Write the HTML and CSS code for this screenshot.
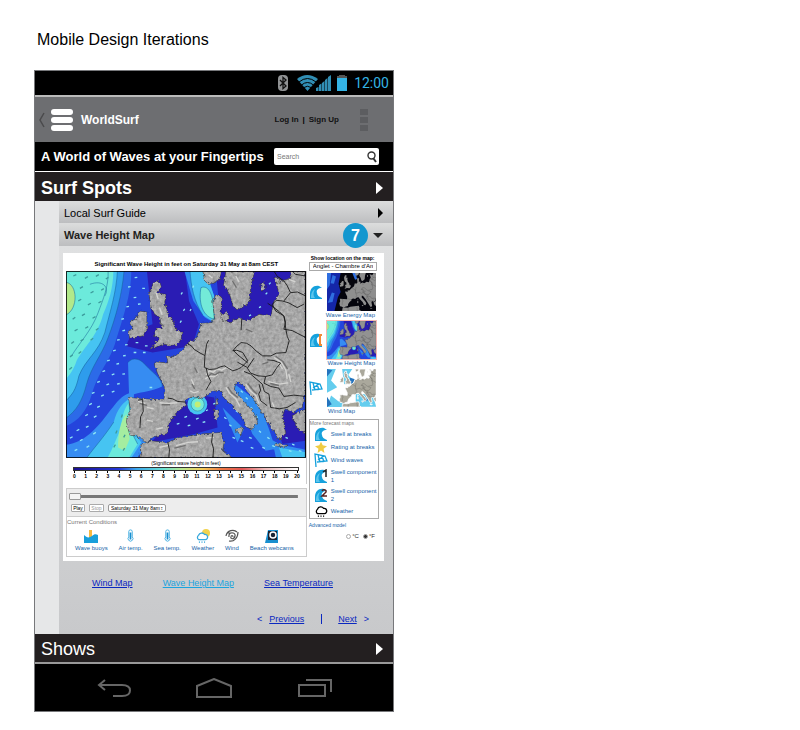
FILE: index.html
```html
<!DOCTYPE html>
<html lang="en">
<head>
<meta charset="utf-8">
<meta name="viewport" content="width=device-width, initial-scale=1">
<title>WorldSurf - Wave Height Map</title>
<link rel="stylesheet" href="styles.css">
</head>
<body>
<svg class="defs" aria-hidden="true">
  <defs>
    <filter id="terrain" x="0" y="0" width="100%" height="100%" color-interpolation-filters="sRGB">
      <feTurbulence type="fractalNoise" baseFrequency="0.1" numOctaves="3" seed="4" result="n"/>
      <feDisplacementMap in="SourceGraphic" in2="n" scale="12" xChannelSelector="R" yChannelSelector="G" result="d"/>
      <feColorMatrix in="n" type="matrix" values="1 0 0 0 0  1 0 0 0 0  1 0 0 0 0  0 0 0 0 1" result="g"/>
      <feComposite in="g" in2="d" operator="in" result="gi"/>
      <feComposite in="d" in2="gi" operator="arithmetic" k1="0" k2="1" k3="0.25" k4="-0.1" result="mix"/>
      <feComposite in="mix" in2="d" operator="in"/>
    </filter>
    <symbol id="sea" viewBox="18 60 723 562" preserveAspectRatio="none">
      <path fill="#2444dc" d="M18 60h723v562H18z"/>
      <path fill="#2a1cb4" d="M262 60h115l12 90 30 70-20 65-120 20-80-20 20-45 60-20zM470 60h275v160H485zM345 490l60-60 60 10 10 90-70 20-130 25zM630 470l111 20v80l-70 10z"/>
      <path fill="#2c6ae8" d="M18 60h197c0 70-25 140-47 210-16 60-52 90-72 160-15 50-40 80-78 96z"/>
      <path fill="#2e9cec" d="M18 60h175c-6 70-25 140-48 200-20 55-50 85-65 140-12 48-30 80-62 102z"/>
      <path fill="#46c4f2" d="M18 60h155c-3 65-23 125-38 185-20 60-58 80-78 130-10 45-20 55-39 75z"/>
      <path fill="#6ceadb" d="M18 60h143c-1 50-13 90-31 130-16 65-60 100-80 140-10 30-20 40-32 55z"/>
      <path fill="#b2e98a" d="M18 94c35 5 38 80 0 98z"/>
      <path fill="#368cf2" d="M205 335c15-20 40-10 55 10 20 22 50 40 48 62-35 15-55 15-85 23l-5 90 47 55-30 45-217 2v-40c60-4 105-65 135-105 20-25 30-40 55-50z"/>
      <path fill="#46c4f2" d="M215 440l5 100 25 35-30 47H80c30-40 50-60 82-108 10-40 28-60 53-74z"/>
      <path fill="#6ceadb" d="M208 455l8 90 18 35-26 42h-65c20-35 24-55 40-85 5-42 8-60 25-82z"/>
      <path fill="#a5eda0" d="M200 490l10 75-15 35-20-10c0-40 5-75 25-100z"/>
      <path fill="#318cf0" d="M375 60h68l22 80 7 80-35-20-35-50z"/>
      <path fill="#46c4f2" d="M392 60h45l28 75v78l-34-20c-28-43-36-90-39-133z"/>
      <path fill="#73ead8" d="M425 110c25-10 40 25 40 95-40-10-47-58-40-95z"/>
      <path fill="#318cf0" d="M640 568c30 20 65 20 101 30v24h-90zM520 395l80 60 30 80 20 60-30 5-40-50zM490 470l65 65-20 40z"/>
      <path fill="#46c4f2" d="M660 590l81 15v17h-70z"/>
      <circle fill="#46c4f2" cx="414" cy="461" r="30"/><circle fill="#75ead8" cx="415" cy="461" r="21"/><circle fill="#c3ed74" cx="415" cy="461" r="9"/>
      <g fill="none" stroke="#145f95" stroke-width="1.5"><path d="M145 60c2 45-15 85-30 125-20 55-60 95-80 130M173 60c-3 65-23 125-38 185-20 60-58 80-78 130-10 45-20 55-39 75M193 60c-6 70-25 140-48 200-20 55-50 85-65 140-12 48-30 80-62 102M18 94c35 5 38 80 0 98M90 100c40-15 60 10 45 35M208 455l8 90 18 35M392 60c3 45 11 90 39 133M425 110c25-10 40 25 40 95-40-10-47-58-40-95M80 622c30-40 50-60 82-108M205 335c15-20 40-10 55 10 20 22 50 40 48 62M395 461a20 20 0 1 0 40 0 20 20 0 1 0-40 0"/></g>
    </symbol>
    <g id="flow" fill="none" stroke-width="4">
      <path stroke="#3c9c9c" d="M40 75l9-4M75 82l9-5M108 76l9-5M138 84l8-5M60 112l9-5M92 126l9-5M124 118l8-5M55 150l9-5M84 162l9-5M116 156l9-5M38 205l8-6M66 194l9-5M98 202l9-5M44 240l9-5M76 232l9-5M108 238l8-6M34 278l8-6M62 270l9-5M92 268l8-6M30 318l8-6M56 308l8-6M28 356l8-7M185 500l3-9M205 520l3-9M168 548l4-9M192 560l4-8M162 590l5-8M190 600l5-8"/>
      <path stroke="#8ee6f4" d="M225 80l8-1M205 108l8-1M248 112l8 0M222 140l8-1M200 168l8-2M235 160l8-1M185 205l8-2M188 240l8-2M172 268l8-2M196 282l8-1M228 275l8 0M256 285l8 0M160 300l8-2M190 315l8-1M222 305l8 0M250 305l8 0M142 330l8-2M170 340l8-2M128 362l8-3M156 372l8-3M188 370l8-1M112 395l8-3M140 402l8-3M172 400l8-2M96 428l8-3M124 436l8-4M156 424l8-3M88 462l8-4M112 470l8-4M76 495l8-4M102 500l8-5M50 540l8-4M78 530l8-4M30 562l8-4M60 570l8-4M100 550l8-5M44 600l8-4M80 590l8-5M300 372l6-4M270 410l8 0M365 130l4-6M372 180l4-6M362 215l4-6M392 180l3-6M400 110l3-6M352 520l8-2M375 500l8-3M385 525l8-2M410 505l8-3M440 480l6-3M430 515l8-2M462 460l7-3M495 500l7 4M510 522l7 4M530 480l7 4M545 420l6 5M560 440l6 5M575 470l6 5M590 495l6 5M520 560l8 3M545 570l8 3M570 560l8 3M600 540l6 5M625 560l7 4M575 590l8 3M610 590l8 3M640 585l8 3M680 560l7 3M700 580l7 3M670 535l6 3M690 600l8 2M720 600l8 2M620 130l5-5M600 170l6-3M570 195l6-3M540 205l6-3M630 100l5-5"/>
    </g>
    <g id="coast">
      <path d="M280 97l20-7 6 18-12 18 26 4-4 26 10 34 19 25 5 25 18 0-3 25-15 20-40-5-35 15 15-25 10-8-20-7 10-20 15-5-4-30-16-10-10-20-7-40zM240 180l22 3v57l-12 15-40 8-5-23 15-5-12-20 17-10z"/>
      <path d="M285 345l0-12 40 3-5-21 25 3 30-28 12-13 22-12 10-24 6-24 30-2 10-15-5-50 10-20 18 10-3 50 10 15 15 10 30-15 25 10 35-20 35 5 10-45 15-20-10-40 40-5 10-25h41v370l-6 10-4 30-30 15-22-10-8 18 10 55-20 20-25-40-25-40-25-40-35-45-20-10-5 25 35 40 25 30 10 25-15 25-20-10-20-40-40-40-20-30-25 5-25 20-30-5-25 10 3 15-30 25-20 30-5 30-40 10-25 20-20-20-30-5-10-45 13-30-6-38 108 8 0-40-20-40z"/>
      <path d="M430 60h57l-7 27-30 15-14-12zM500 60h88l-12 42-5 50-30 25-18-7-12-40-18-28zM485 195l18-12 8 20-18 10zM605 95l12-4 2 22-12 8zM645 78l18 3-4 18-12-4z"/>
      <path d="M245 580l30-10 50 5 35-15 60-10 65-5 10 30-5 25 30 22H240zM525 536l30-6-10 22zM463 475l15 4-2 28-12-4zM470 440l8 18-9 10zM700 495l41-25v80l-25-15zM650 578l35 5-8 6-25-3z"/>
    </g>
    <g id="relief" fill="none" stroke-width="4">
      <path stroke="#d4d4d2" d="M440 372l10-12 12 4 12-10 14 4 14-8 12 2M438 384l12-8 14 2 12-8M500 410l12 18 18 16 12 22M560 400l14 20 16 14 10 24M645 320l22 14 14 24 4 26M655 330l16 24M628 392l30 8 30-4M690 370l6 24M392 420l12 6 14-4M396 385l8 18M235 452l22 6M262 470l20 4M300 456l28 2 26-2M262 508l18 4M290 535l20-4M290 125l6 20M300 170l8 22M300 590l26-6M350 585l36-10 30-2M440 562l24-2M448 72l12 10M530 75l10 18M690 85l20 8M640 455l8 20"/>
      <path stroke="#707070" d="M446 378l10-10 12 4 12-8 14 2M506 408l12 18 18 14M566 398l14 18 14 14M650 316l22 16 14 22M634 398l26 6M398 400l8 14M240 458l22 6M306 462l26 0M345 592l34-8M406 350l8 16M520 90l12 20M610 340l18-6M560 235l20 8M300 215l14 12"/>
    </g>
    <g id="borders" fill="none" stroke="#161616" stroke-width="2.6" stroke-linejoin="round">
      <path d="M385 278l12 8 8 10 20 12 12 6 5-34 6-12M437 314l-2 36M325 442l14 2 16 8 25 2M235 448l14-2 2 36-8 16-2 34M436 350l14 6 21-2 12-6 13-3 25 15 13-4 12-6 20-20-15-25-18-7-12 2 10-12 15-13 16 2 14 8 16 16 19 14 25 0 16-8 29-2 10-35-6-14-4-21-5-38-14-14-21-16-15-10M546 238l2-34M522 298l14 14 30 24M585 322l-20 30 10 15 22 8 23 2 20-5 14-22 11-13-20-8-20-2M620 377l-5 20 20 10 25 5 15 25 30-4 36 4M555 362l20 8 35 30 6 22 14 8 5 40M600 400l5 18-6 12 6 20 20 15M635 470l26 4 24-4 25-15M640 160l12-12 18 2 20 6 25 14 20-10M645 60l10 16 20 14 10 14 10 21-20 25M640 160l10 20 24 14 6 20-5 21 25 4 41 21M441 352l4 20 10 20-8 14-7 12M535 334l30 16M460 550l-3 24 6 20-2 28M325 575l5 22-2 25M700 60l10 10 31 5M696 125l20-2 25 12"/>
    </g>
    <symbol id="europe" viewBox="18 60 723 562" preserveAspectRatio="none"><use href="#sea" x="18" y="60" width="723" height="562"/><g class="land" stroke-width="3"><use href="#coast"/></g><use href="#borders"/></symbol>
    <symbol id="wave" viewBox="0 0 14 14"><path fill="#16a1dc" d="M1 14V9C1 3 5 0 10 1l3 2C9 3 7 5 8 8c0 2 2 4 5 5v1z"/><path fill="#5cc5ec" d="M2 13c0-5 1-7 4-9-2 4-2 6 0 9z"/></symbol>
    <symbol id="sock" viewBox="0 0 14 14"><path fill="none" stroke="#16a1dc" stroke-width="1.300" d="M2 14L1 1l10 2 2 5-10 1M4 2l2 7M8 3l2 6M4 7l6-4"/></symbol>
    <symbol id="cloud" viewBox="0 0 16 14"><path fill="#fff" stroke="currentColor" stroke-width="1.500" d="M4 10a3 3 0 0 1 0-5 4 4 0 0 1 7-1 3 3 0 0 1 1 6z"/><path stroke="currentColor" d="M5 12v2M8 12v2M11 12v2"/></symbol>
    <symbol id="thermo" viewBox="0 0 8 16"><path fill="#fff" stroke="#38a9df" d="M2 9V3q0-2 2-2t2 2v6q2 2 0 4-2 2-4 0-2-2 0-4z"/><path stroke="#178fd0" stroke-width="2" d="M4 4v8"/></symbol>
  </defs>
</svg>

<main class="page">
  <h1 class="page-title">Mobile Design Iterations</h1>
  <div class="phone">
    <div class="status">
      <svg width="12" height="16" viewBox="0 0 12 16" aria-hidden="true"><rect x="1" width="10" height="16" rx="4" fill="#909294"/><path fill="none" stroke="#111" stroke-width="1.300" d="M3 5l6 6-3 2.500V2.500L9 5l-6 6"/></svg>
      <svg class="wifi" width="35" height="16" viewBox="0 0 35 16" aria-hidden="true"><path fill="#318fb5" d="M0 4Q10-4 21 4L10.500 16z"/><path fill="none" stroke="#000" d="M2 7Q10.500 0 19 7M4.500 10Q10.500 5 16.500 10M7 12.500Q10.500 10 14 12.500"/><path fill="#318fb5" d="M19 16v-3l2.500-1v4zM22 16v-6l2.500-1.500V16zM25 16V8l2.500-2v10zM28 16V5l2.500-2v13zM31 16V2l3-2v16z"/></svg>
      <svg width="12" height="16" viewBox="0 0 12 16" aria-hidden="true"><path fill="#555" d="M3 0h6v1h2v3H1V1h2z"/><path fill="#34b4e5" d="M1 3h10v13H1z"/></svg>
      <span class="clock">12:00</span>
    </div>
    <header class="appbar">
      <svg class="back" width="6" height="16" viewBox="0 0 6 16" aria-hidden="true"><path fill="none" stroke="#4a4a4c" stroke-width="1.500" d="M5 1L1 8l4 7"/></svg>
      <button class="menu" aria-label="Menu"><i></i><i></i><i></i></button>
      <strong class="brand">WorldSurf</strong>
      <nav class="account"><a href="#">Log In</a><span>|</span><a href="#">Sign Up</a></nav>
      <button class="more" aria-label="More"><i></i><i></i><i></i></button>
    </header>
    <div class="tagline">
      <strong>A World of Waves at your Fingertips</strong>
      <label class="search">
        <input type="search" placeholder="Search" aria-label="Search">
        <svg width="10" height="12" viewBox="0 0 10 12" aria-hidden="true"><circle cx="4.500" cy="4.500" r="3.500" fill="none" stroke="#333" stroke-width="1.400"/><path stroke="#333" stroke-width="2" d="M6.500 7.500L9 11"/></svg>
      </label>
    </div>
    <button class="section bold"><span>Surf Spots</span><i class="arrow"></i></button>
    <div class="content">
      <button class="row"><span>Local Surf Guide</span><i class="arrow small"></i></button>
      <button class="row open"><span>Wave Height Map</span><b class="badge">7</b><i class="caret"></i></button>
      <div class="body">
        <section class="forecast">
          <div class="main-col">
            <h2>Significant Wave Height in feet on Saturday 31 May at 8am CEST</h2>
            <div class="map-frame">
              <svg class="map" viewBox="18 60 723 562" preserveAspectRatio="none" role="img" aria-label="Wave height map of Europe">
                <use href="#sea" x="18" y="60" width="723" height="562"/>
                <use href="#flow"/>
                <g filter="url(#terrain)" fill="#a0a0a0" stroke="#444" stroke-width="2"><use href="#coast"/></g>
                <use href="#relief"/>
                <use href="#borders"/>
                <path fill="none" stroke="#000" stroke-width="3" d="M19 61h721v560H19z"/>
              </svg>
              <div class="scale">
                <p>(Significant wave height in feet)</p>
                <div class="bar"></div>
                <div class="nums"><span>0</span><span>1</span><span>2</span><span>3</span><span>4</span><span>5</span><span>6</span><span>7</span><span>8</span><span>9</span><span>10</span><span>11</span><span>12</span><span>13</span><span>14</span><span>15</span><span>16</span><span>17</span><span>18</span><span>19</span><span>20</span></div>
              </div>
            </div>
            <div class="player">
              <input class="slider" type="range" min="0" max="100" value="0" aria-label="Forecast time">
              <div class="controls"><button>Play</button><button class="dim">Stop</button>
                <span class="pick"><select aria-label="Forecast date"><option>Saturday 31 May 8am</option></select></span></div>
            </div>
            <div class="conditions">
              <p>Current Conditions</p>
              <ul>
                <li><svg width="14" height="14" viewBox="0 0 14 14"><path fill="#f6b941" d="M5 1h3v8H5z"/><path fill="#189fdb" d="M0 6c3 3 5 3 8 1 2-2 4-2 6-1v8H0z"/></svg><a href="#">Wave buoys</a></li>
                <li><svg width="7" height="14"><use href="#thermo"/></svg><a href="#">Air temp.</a></li>
                <li><svg width="7" height="14"><use href="#thermo"/></svg><a href="#">Sea temp.</a></li>
                <li><svg class="sunny" width="16" height="14" viewBox="0 0 16 14"><circle cx="11" cy="4" r="4" fill="#f2d34d"/><use href="#cloud" y="2" width="14" height="12"/></svg><a href="#">Weather</a></li>
                <li><svg width="14" height="14" viewBox="0 0 14 14" fill="none" stroke="#555" stroke-width="1.200"><path d="M1 7C2 1 9 0 12 3M13 3c0 6-4 10-9 9M4 8c-1-6 7-5 6-1-1 4-5 3-4 1 0-2 2-2 2 0M2 4h5"/></svg><a href="#">Wind</a></li>
                <li><svg width="14" height="14" viewBox="0 0 14 14"><path fill="#188fcf" d="M0 14L3 1h10v13z"/><path fill="#192334" d="M3 2h9v9H3z"/><circle cx="8" cy="6" r="3" fill="none" stroke="#fff" stroke-width="1.500"/></svg><a href="#">Beach webcams</a></li>
              </ul>
            </div>
          </div>
          <aside class="side-col">
            <label class="loc"><b>Show location on the map:</b><select><option>Anglet - Chambre d'Am</option></select></label>
            <a class="thumb energy" href="#"><svg class="ico"><use href="#wave"/></svg><span class="pic"><svg class="mini" viewBox="18 60 723 562" preserveAspectRatio="none"><path d="M18 60h723v562H18z" fill="#04040c"/><path fill="#1426a8" d="M18 60h200l-30 160 30 120-40 80-50 202H18z"/><path fill="#2f6fe0" d="M18 60h60l-20 180-40 60zM100 90l50 20-30 110-50-10zM90 350l40 10-30 130-70 10zM390 60h50l20 90-30 10z"/><use href="#coast" fill="#8f8f8f"/><use href="#borders"/></svg></span><em>Wave Energy Map</em></a>
            <a class="thumb current" href="#"><svg class="ico" viewBox="0 0 14 14"><use href="#wave"/><path fill="none" stroke="#f08a35" stroke-width="2" d="M13 2h-2v10h2"/></svg><span class="pic"><svg class="mini"><use href="#europe"/></svg></span><em>Wave Height Map</em></a>
            <a class="thumb wind" href="#"><svg class="ico"><use href="#sock"/></svg><span class="pic"><svg class="mini" viewBox="18 60 723 562" preserveAspectRatio="none"><path fill="#fff" d="M18 60h723v562H18z"/><path fill="#64cdee" d="M18 60h130l-70 170 90 100-150 80zM240 60h150l-60 90 70 80-130 60zM18 622l60-170 110 90 60-30 60 110zM440 430h250l50 190H440z"/><path fill="#2473bd" d="M18 60l80 20-80 90zM360 190l70 20-40 70-50-20zM18 470l70 110-70 42zM500 430l130 90-60 20z"/><use href="#coast" fill="#aaa89c" stroke="#fff" stroke-width="12"/><use href="#borders"/></svg></span><em>Wind Map</em></a>
            <div class="more-maps">
              <p>More forecast maps</p>
              <ul>
                <li><svg class="ico"><use href="#wave"/></svg><a href="#">Swell at breaks</a></li>
                <li><svg class="ico star" viewBox="0 0 14 14"><path fill="#f0cc43" d="M7 1l2 4 5 1-4 3 1 5-4-3-4 3 1-5-4-3 5-1z"/></svg><a href="#">Rating at breaks</a></li>
                <li><svg class="ico"><use href="#sock"/></svg><a href="#">Wind waves</a></li>
                <li class="tall"><svg class="ico"><use href="#wave"/><path fill="none" stroke="#222" stroke-width="1.500" d="M9 3l3-2v7"/></svg><a href="#">Swell component 1</a></li>
                <li class="tall"><svg class="ico"><use href="#wave"/><path fill="none" stroke="#522" stroke-width="1.500" d="M8 3c2-3 6 0 3 2L8 8h5"/></svg><a href="#">Swell component 2</a></li>
                <li><svg class="ico" viewBox="0 0 16 14"><use href="#cloud"/></svg><a href="#">Weather</a></li>
              </ul>
            </div>
            <a class="advanced" href="#">Advanced model</a>
            <div class="units"><label><input type="radio" name="unit">°C</label><label><input type="radio" name="unit" checked>°F</label></div>
          </aside>
        </section>
        <nav class="maps"><a href="#">Wind Map</a><a class="active" href="#">Wave Height Map</a><a href="#">Sea Temperature</a></nav>
        <nav class="pager"><span>&lt;</span><a href="#">Previous</a><i></i><a href="#">Next</a><span>&gt;</span></nav>
      </div>
    </div>
    <button class="section shows"><span>Shows</span><i class="arrow"></i></button>
    <nav class="softkeys">
      <button aria-label="Back"><svg width="34" height="20" viewBox="0 0 34 20"><path d="M8 2L2 7l6 5M2 7h23q8 0 8 5.500T25 18h-9"/></svg></button>
      <button aria-label="Home"><svg width="38" height="20" viewBox="0 0 38 20"><path d="M2 8L19 1l17 7v11H2z"/></svg></button>
      <button aria-label="Recent apps"><svg width="36" height="20" viewBox="0 0 36 20"><path d="M2 7h26v11H2zM9 2h25v12"/></svg></button>
    </nav>
  </div>
</main>
</body>
</html>
```
FILE: styles.css
```css
* { box-sizing: border-box; }
body { margin: 0; background: #fff; font-family: "Liberation Sans", Arial, sans-serif; color: #000; }
p, ul, h1, h2 { margin: 0; padding: 0; }
ul { list-style: none; }
button { border: 0; padding: 0; background: none; font: inherit; color: inherit; text-align: left; }
svg { display: block; flex: none; }
.defs { position: absolute; width: 0; height: 0; }

.page { padding: 30px 34px 18px; }
.page-title { padding-left: 3px; font-size: 16px; line-height: 20px; font-weight: 400; margin-bottom: 20px; }
.phone { width: 45vw; min-width: 340px; border: 1px solid #77787b; background: #000; }

.status { display: flex; align-items: center; justify-content: flex-end; height: 26px; padding-right: 4px; border-bottom: 2px solid #bbb; }
.wifi { margin: 0 4px 0 8px; }
.clock { margin-left: 6px; font: 14px/20px Roboto, sans-serif; color: #34b4e5; }

.appbar { display: flex; align-items: center; height: 45px; padding: 0 25px 0 4px; background: #6d6e71; }
.menu { display: grid; gap: 2px; width: 22px; margin: 0 8px 0 6px; }
.menu i { height: 6px; border-radius: 3px; background: #fff; }
.brand { font-size: 12px; line-height: 16px; color: #fff; }
.account { display: flex; gap: 4px; margin-left: auto; font-size: 8px; line-height: 12px; font-weight: 700; }
.account a { color: #111; text-decoration: none; }
.more { display: grid; gap: 2px; width: 8px; margin-left: 21px; }
.more i { height: 6px; background: #5c5d60; }

.tagline { display: flex; align-items: center; justify-content: space-between; height: 30px; padding: 0 14px 0 6px; border-bottom: 1px solid #fff; color: #fff; font-size: 13px; white-space: nowrap; }
.search { display: flex; align-items: center; width: 105px; height: 17px; padding: 0 2px 0 3px; border-radius: 2px; background: #fff; }
.search input { flex: 1; min-width: 0; padding: 0; border: 0; outline: 0; background: none; font: 7px/12px "Liberation Sans", sans-serif; }
.search input::placeholder { color: #777; }

.section { display: flex; align-items: center; justify-content: space-between; width: 100%; height: 29px; padding: 2px 10px 0 6px; background: #231f20; color: #fff; font-size: 18px; line-height: 24px; }
.bold { font-weight: 700; }
.shows { height: 30px; border-bottom: 2px solid #999; }
.arrow { border: solid transparent; border-width: 6px 0 6px 7px; border-left-color: currentColor; }
.arrow.small { border-width: 5px 0 5px 5px; }
.caret { margin-left: 5px; border: solid transparent; border-width: 5px 5px 0; border-top-color: #222; }

.content { padding-left: 24px; background: #e6e7e8; }
.row { display: flex; align-items: center; width: 100%; height: 22px; padding: 1px 10px 0 5px; background: linear-gradient(#dcdddd, #bdbec0); font-size: 11px; line-height: 16px; }
.row .arrow { margin-left: auto; }
.open { height: 23px; font-weight: 700; color: #231f20; }
.badge { width: 25px; height: 25px; margin-left: auto; border-radius: 50%; background: #1397cf; color: #fff; font-size: 16px; line-height: 25px; text-align: center; z-index: 1; }
.body { padding: 7px 9px 9px 4px; background: linear-gradient(#dfe0e1, #c8c9cb); }

.forecast { display: grid; grid-template-columns: 24fr 7fr; gap: 2px; padding: 2px 5px 4px 3px; background: #fff; font-size: 6px; line-height: 8px; }
.forecast a { color: #1463a8; text-decoration: none; }
.main-col, .side-col { min-width: 0; }
.main-col h2 { padding: 5px 0 3px; font-size: 6px; line-height: 8px; text-align: center; white-space: nowrap; }
.map-frame { margin-bottom: 4px; padding-bottom: 4px; border-right: 1px solid #ccc; }
.map { width: 100%; aspect-ratio: 241 / 188; }
.scale { padding: 1px 6px 0; font-size: 5px; }
.scale p { text-align: center; }
.bar { height: 4px; margin: 0 1px; border: 1px solid #333; background: linear-gradient(90deg, #1a0f91, #2438d8 20%, #3ba9ee 28%, #6ce2d3 40%, #b8e890 48%, #f4ce5a 57%, #ef7845 66%, #e25555 75%, #efbcbc 85%, #fff); }
.nums { display: flex; justify-content: space-between; height: 9px; font-weight: 700; }
.nums span { display: flex; flex-direction: column; align-items: center; width: 5px; line-height: 6px; }
.nums span::before { content: ""; flex: none; width: 1px; height: 2px; background: #000; }

.player { padding: 4px 8px 4px 2px; border: 1px solid #ccc; background: #ededed; }
.slider { display: block; appearance: none; width: 100%; height: 7px; margin: 0; background: linear-gradient(#777, #777) center / 100% 3px no-repeat; }
.slider::-webkit-slider-thumb { appearance: none; width: 12px; height: 7px; border: 1px solid #999; border-radius: 1px; background: #f4f4f4; }
.controls { display: flex; gap: 4px; padding: 4px 2px 0; }
.controls button { width: 14px; height: 8px; border: 1px solid #aaa; border-radius: 1px; background: #fff; font-size: 5px; line-height: 6px; text-align: center; }
.controls .dim { width: 15px; color: #999; }
.controls select { display: block; appearance: none; width: 58px; height: 8px; padding: 0 2px; border: 1px solid #999; border-radius: 2px; background: #fff; font: 5px/6px "Liberation Sans", sans-serif; }
.pick { display: grid; align-items: center; }
.pick::after { content: "\2195"; grid-area: 1 / 1; justify-self: end; padding-right: 3px; font-size: 5px; }
.pick select { grid-area: 1 / 1; }
.conditions { padding: 1px 0 2px; border: 1px solid #ccc; border-top: 0; }
.conditions p, .more-maps p { color: #777; }
.conditions ul { display: flex; justify-content: space-between; padding: 3px 12px 2px 8px; }
.conditions li { display: grid; justify-items: center; gap: 1px; white-space: nowrap; }
.sunny { color: #37a8dc; }

.loc { display: block; overflow: hidden; white-space: nowrap; }
.loc b { display: block; padding-left: 2px; font-size: 5px; line-height: 7px; }
.loc select { display: block; appearance: none; width: 68px; height: 9px; padding: 0 3px; border: 1px solid #aaa; background: #fff; font: 6px/7px "Liberation Sans", sans-serif; }
.ico { width: 14px; height: 14px; }
.thumb { display: grid; grid-template-columns: 17px 1fr; align-items: center; padding: 1px 2px 0 0; }
.thumb em { grid-column: 1 / 3; justify-self: end; padding-right: 2px; font-style: normal; line-height: 7px; white-space: nowrap; }
.thumb.wind em { margin-right: 20px; }
.pic { border: 1px solid transparent; }
.mini { width: 100%; height: 38px; }
.land { fill: #929292; stroke: #333; }
.current .pic { border-color: #f5b8b2; }
.more-maps { width: 70px; margin-top: 4px; border: 1px solid #aaa; padding-bottom: 1px; }
.more-maps p { font-size: 5px; line-height: 7px; }
.more-maps li { display: flex; align-items: center; gap: 3px; height: 13px; padding-left: 4px; }
.more-maps .tall { height: 19px; }
.more-maps .star { padding: 1px; }
.more-maps a { line-height: 8px; }
.advanced { display: block; padding: 2px 0; font-size: 5px; }
.units { display: flex; justify-content: flex-end; gap: 4px; padding: 1px 4px 0; color: #333; }
.units label { display: flex; align-items: center; gap: 1px; }
.units input { appearance: none; width: 5px; height: 5px; margin: 0; border: 1px solid #aaa; border-radius: 50%; }
.units input:checked { background: #333; }

.maps { display: flex; justify-content: space-between; padding: 16px 51px 0 29px; font-size: 9px; line-height: 12px; }
.maps a, .pager a { color: #0a28c0; }
.maps .active { color: #1ba4df; }
.pager { display: flex; justify-content: flex-end; align-items: center; gap: 7px; padding: 24px 15px 0 0; font-size: 9px; line-height: 12px; color: #0a28c0; }
.pager i { width: 1px; height: 10px; margin: 0 9px 0 10px; background: #0a28c0; }

.softkeys { display: flex; justify-content: space-between; align-items: center; height: 47px; padding: 0 60px 0 62px; }
.softkeys svg { fill: none; stroke: #666; stroke-width: 2; }
```
